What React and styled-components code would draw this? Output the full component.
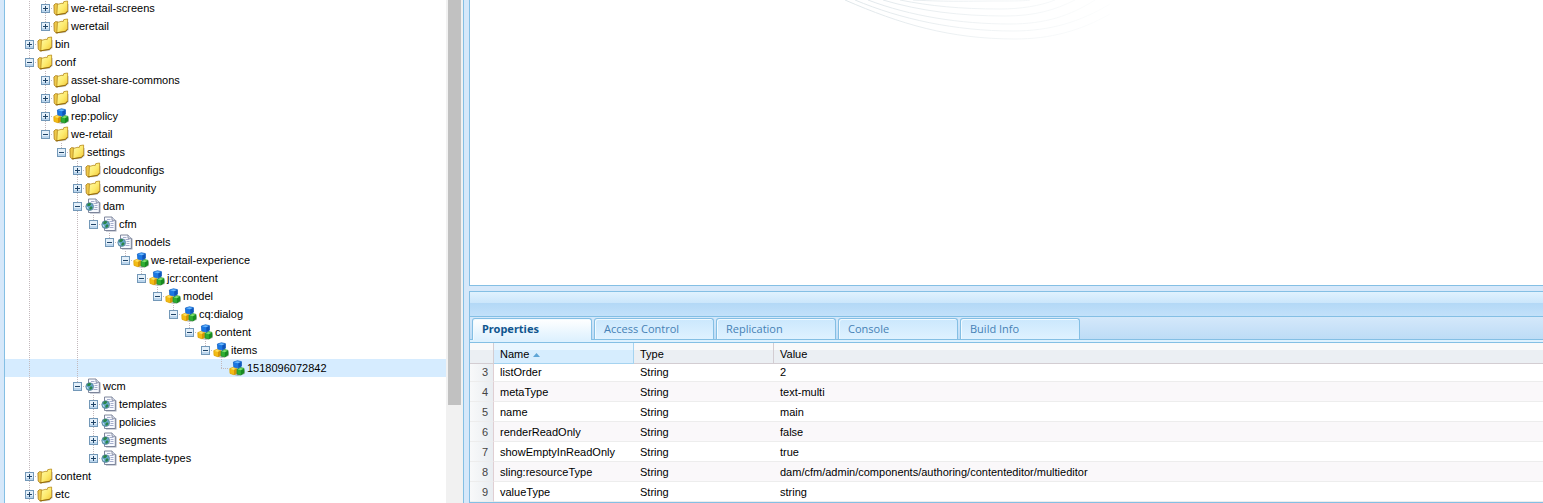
import React, { useState } from "react";
import styled, { createGlobalStyle } from "styled-components";

// guides: one flag per ancestor level, 1 draws the dotted line
const NODES = [
  { name: "we-retail-screens", guides: [0, 1], kind: "folder" },
  { name: "weretail", guides: [0, 1], kind: "folder", last: true },
  { name: "bin", guides: [0], kind: "folder" },
  { name: "conf", guides: [0], kind: "folder", open: true },
  { name: "asset-share-commons", guides: [0, 1], kind: "folder" },
  { name: "global", guides: [0, 1], kind: "folder" },
  { name: "rep:policy", guides: [0, 1], kind: "node" },
  { name: "we-retail", guides: [0, 1], kind: "folder", open: true, last: true },
  { name: "settings", guides: [0, 1, 0], kind: "folder", open: true, last: true },
  { name: "cloudconfigs", guides: [0, 1, 0, 0], kind: "folder" },
  { name: "community", guides: [0, 1, 0, 0], kind: "folder" },
  { name: "dam", guides: [0, 1, 0, 0], kind: "page", open: true },
  { name: "cfm", guides: [0, 1, 0, 0, 1], kind: "page", open: true, last: true },
  { name: "models", guides: [0, 1, 0, 0, 1, 0], kind: "page", open: true, last: true },
  { name: "we-retail-experience", guides: [0, 1, 0, 0, 1, 0, 0], kind: "node", open: true, last: true },
  { name: "jcr:content", guides: [0, 1, 0, 0, 1, 0, 0, 0], kind: "node", open: true, last: true },
  { name: "model", guides: [0, 1, 0, 0, 1, 0, 0, 0, 0], kind: "node", open: true, last: true },
  { name: "cq:dialog", guides: [0, 1, 0, 0, 1, 0, 0, 0, 0, 0], kind: "node", open: true, last: true },
  { name: "content", guides: [0, 1, 0, 0, 1, 0, 0, 0, 0, 0, 0], kind: "node", open: true, last: true },
  { name: "items", guides: [0, 1, 0, 0, 1, 0, 0, 0, 0, 0, 0, 0], kind: "node", open: true, last: true },
  { name: "1518096072842", guides: [0, 1, 0, 0, 1, 0, 0, 0, 0, 0, 0, 0, 0], kind: "node", leaf: true, last: true },
  { name: "wcm", guides: [0, 1, 0, 0], kind: "page", open: true, last: true },
  { name: "templates", guides: [0, 1, 0, 0, 0], kind: "page" },
  { name: "policies", guides: [0, 1, 0, 0, 0], kind: "page" },
  { name: "segments", guides: [0, 1, 0, 0, 0], kind: "page" },
  { name: "template-types", guides: [0, 1, 0, 0, 0], kind: "page", last: true },
  { name: "content", guides: [0], kind: "folder" },
  { name: "etc", guides: [0], kind: "folder" },
];

const TABS = ["Properties", "Access Control", "Replication", "Console", "Build Info"];

const PROPERTIES = [
  [3, "listOrder", "String", "2"],
  [4, "metaType", "String", "text-multi"],
  [5, "name", "String", "main"],
  [6, "renderReadOnly", "String", "false"],
  [7, "showEmptyInReadOnly", "String", "true"],
  [8, "sling:resourceType", "String", "dam/cfm/admin/components/authoring/contenteditor/multieditor"],
  [9, "valueType", "String", "string"],
];

// path per ring, outermost first
const RINGS = [
  "M375 0C430 24 480 39 545 39C580 39 610 31 640 14",
  "M385 0C430 19 485 31 543 31C580 31 610 22 640 4",
  "M398 0C440 16 490 24 540 24C575 24 600 16 625 0",
  "M413 0C450 11 490 16 535 16C565 16 585 10 605 0",
  "M430 0C460 6 490 9 530 9C550 9 570 6 585 0",
  "M443 0C480 2 500 1 528 1C545 1 555 1 560 0",
];

function Gradients() {
  return (
    <Defs aria-hidden="true">
      <defs>
        <linearGradient id="gold" x1="0" y1="0" x2="1" y2="1">
          <stop offset="0" stopColor="#fffcae" />
          <stop offset=".55" stopColor="#fdea6c" />
          <stop offset="1" stopColor="#f0c437" />
        </linearGradient>
        <linearGradient id="ring" gradientUnits="userSpaceOnUse" x1="370" y1="0" x2="650" y2="0">
          <stop offset="0" stopColor="#dbe3e7" />
          <stop offset=".5" stopColor="#edf1f3" />
          <stop offset="1" stopColor="#fdfefe" />
        </linearGradient>
      </defs>
    </Defs>
  );
}

function NodeIcon({ kind }) {
  if (kind === "folder") {
    return (
      <Icon viewBox="0 0 16 16" aria-hidden="true">
        <path d="M3 15.5L12 15L15.8 12V4L14 4V12L5 14Z" fill="#8c8c8c" opacity=".4" />
        <path d="M.9 5L2.6 3.6L5 4V14.8H2.8L1.2 13Z" fill="#eec84a" stroke="#a87b17" strokeWidth=".8" strokeLinejoin="round" />
        <path d="M4.4 4.4L9 3.2L10.2 3.6L10.8 1.6L14.6 1V11L12.6 13.2L3.8 14.8Z" fill="url(#gold)" stroke="#b88c1c" strokeWidth=".8" strokeLinejoin="round" />
        <path d="M2.9 14.9L12.6 13.4L14.6 11" stroke="#8f6508" strokeWidth=".9" fill="none" />
      </Icon>
    );
  }
  if (kind === "page") {
    return (
      <Icon viewBox="0 0 16 16" aria-hidden="true">
        <path d="M5 15.5H15.5V4.5H14V14H5Z" fill="#7d869c" opacity=".7" />
        <path d="M3.5 1H11L14.3 4.3V14.5H3.5Z" fill="#f8faff" stroke="#737b92" strokeWidth=".9" />
        <path d="M11 1V4.3H14.3" fill="#dfe4f2" stroke="#737b92" strokeWidth=".8" />
        <path d="M6 3.5H9.5M8.5 5.5H12.5M9.5 7.5H12.5M9.5 9.5H12.5M8.5 11.5H12.5" stroke="#8f9ac0" strokeWidth=".8" />
        <circle cx="4.7" cy="8.6" r="3.9" fill="#65a5c8" stroke="#557d92" strokeWidth=".7" />
        <path d="M2.4 6.2C3.4 5 4.8 4.8 5.8 5.6C6.8 6.6 5.4 7.4 4.4 8C3.6 8.4 2.4 7.8 2 7.6ZM5 8.8C6.6 8 7.8 8.8 7.4 9.8C6.8 11.2 5.6 12.2 4.6 11.6C4 10.8 4.6 9.6 5 8.8Z" fill="#2a8548" />
        <path d="M1.6 9L3 9.8L2.8 11" stroke="#d5eaf5" strokeWidth=".8" fill="none" />
      </Icon>
    );
  }
  return (
    <Icon viewBox="0 0 16 16" aria-hidden="true">
      <path d="M3 14.6L9 16L15.9 14V9L14 13Z" fill="#555" opacity=".4" />
      <g strokeWidth=".8" strokeLinejoin="round">
        <path d="M.8 8.6L3.6 7.6L7.6 8.4V13.4L5 14.8L1 13.4Z" fill="#f3bb12" stroke="#e0a70d" />
        <path d="M1.4 8.9L3.8 8L6.8 8.7L4.8 9.8Z" fill="#ffe873" />
        <path d="M5 10L7.6 8.6V13.4L5 14.8Z" fill="#d4940a" />
        <path d="M8 9.2L11.4 7.6L15 8.4V12.8L12 15L8 14Z" fill="#2eae32" stroke="#228f28" />
        <path d="M8.6 9.3L11.4 8L14.6 8.7L11.6 10.2Z" fill="#80df6e" />
        <path d="M11.8 10.4L15 8.8V12.8L12 15Z" fill="#188a20" />
        <path d="M4.4 2L8.4 .8L12.4 1.6V6.2L9.4 8L4.8 7Z" fill="#1b78e4" stroke="#1765c4" />
        <path d="M5 2.2L8.4 1.2L11.8 1.9L9 3.2Z" fill="#6bb8fd" />
        <path d="M9.2 3.4L12.4 2V6.2L9.4 8Z" fill="#1055b8" />
      </g>
    </Icon>
  );
}

function TreeRow({ node, selected, onSelect }) {
  return (
    <Row role="treeitem" aria-level={node.guides.length} aria-selected={selected} $selected={selected} onClick={onSelect}>
      {node.guides.map((level, i) => <Guide key={i} $line={hasLine(node.guides, i)} />)}
      <Elbow $last={node.last}>
        {!node.leaf && (
          <Toggle aria-label={(node.open ? "Collapse " : "Expand ") + node.name}>
            <svg width="9" height="9" viewBox="0 0 9 9" shapeRendering="crispEdges">
              <rect x=".5" y=".5" width="8" height="8" fill="#e4f0fa" stroke="#7398b8" />
              <path d="M1 6H8V8H1Z" fill="#bcd6ed" />
              <path d={node.open ? "M2 4.5H7" : "M2 4.5H7M4.5 2V7"} stroke="#1f4468" />
            </svg>
          </Toggle>
        )}
      </Elbow>
      <NodeIcon kind={node.kind} />
      <Label>{node.name}</Label>
    </Row>
  );
}

function hasLine(guides, i) {
  return guides[i] === 1;
}

function App() {
  const [selected, setSelected] = useState(20);
  const [tab, setTab] = useState(0);
  return (
    <>
      <GlobalStyle />
      <Gradients />
      <Page>
        <TreePanel>
          <Tree role="tree">
            {NODES.map((node, i) => (
              <TreeRow key={i} node={node} selected={i === selected} onSelect={() => setSelected(i)} />
            ))}
          </Tree>
          <Scrollbar><Thumb /></Scrollbar>
        </TreePanel>
        <Main>
          <Home>
            <svg width="700" height="60" viewBox="0 0 700 60" fill="none" aria-hidden="true">
              {RINGS.map((d) => <path key={d} d={d} stroke="url(#ring)" strokeWidth=".9" />)}
            </svg>
          </Home>
          <Details>
            <Toolbar />
            <TabStrip role="tablist">
              {TABS.map((name, i) => (
                <Tab key={name} role="tab" aria-selected={i === tab} $active={i === tab} onClick={() => setTab(i)}>{name}</Tab>
              ))}
            </TabStrip>
            <TabSpacer />
            <Grid>
              <colgroup>
                <NumberCol />
                <FieldCol />
                <FieldCol />
                <col />
              </colgroup>
              <thead>
                <tr>
                  <Th aria-label="Row" />
                  <Th $sorted aria-sort="ascending">
                    Name
                    <SortArrow viewBox="0 0 7 4" aria-hidden="true"><path d="M0 4L3.5 0L7 4Z" fill="#5da5d6" /></SortArrow>
                  </Th>
                  <Th>Type</Th>
                  <Th>Value</Th>
                </tr>
              </thead>
              <tbody>
                {PROPERTIES.map(([num, name, type, value]) => (
                  <PropertyRow key={num}>
                    <NumberCell>{num}</NumberCell>
                    <Td>{name}</Td>
                    <Td>{type}</Td>
                    <Td>{value}</Td>
                  </PropertyRow>
                ))}
              </tbody>
            </Grid>
          </Details>
        </Main>
      </Page>
    </>
  );
}
export default App;

const GlobalStyle = createGlobalStyle`
*{
  box-sizing:border-box;
}
body{
  margin:0;
  color:#000;
  font-family:"Liberation Sans",Arial,sans-serif;
  font-size:11px;
}
button{
  margin:0;
  padding:0;
  border:0;
  background:none;
  font:inherit;
  cursor:pointer;
}
`
const Defs = styled.svg`
position:absolute;
width:0;
height:0;
`
const Page = styled.div`
display:flex;
height:100vh;
padding-left:4px;
overflow:hidden;
background:#d6e8fa;
`
const TreePanel = styled.div`
display:flex;
flex:none;
width:30%;
max-width:460px;
border:solid #84bfe4;
border-width:0 1px;
background:#fff;
`
const Tree = styled.ul`
display:flex;
flex-direction:column;
justify-content:flex-end;
flex:1;
min-width:0;
margin:0;
padding:0;
overflow:hidden;
list-style:none;
`
const Row = styled.li`
display:flex;
align-items:center;
flex:none;
height:18px;
line-height:18px;
white-space:nowrap;
cursor:pointer;
background:${props => props.$selected ? "#d6ecff" : "none"};
`
const Guide = styled.span`
flex:none;
width:16px;
height:18px;
background:${props => props.$line ? "repeating-linear-gradient(#c3b9bd 0 1px,transparent 1px 2px) 8px 0/1px 100% no-repeat" : "none"};
`
const Elbow = styled.span`
display:flex;
flex:none;
justify-content:center;
align-items:center;
width:16px;
height:18px;
background:
  repeating-linear-gradient(#c3b9bd 0 1px,transparent 1px 2px) 8px 0/1px ${props => props.$last ? "9px" : "100%"} no-repeat,
  repeating-linear-gradient(90deg,#c3b9bd 0 1px,transparent 1px 2px) 8px 9px/8px 1px no-repeat;
`
const Toggle = styled.button`
display:flex;
padding-top:1px;
padding-left:1px;
`
const Icon = styled.svg`
flex:none;
width:16px;
height:16px;
`
const Label = styled.span`
padding-left:2px;
`
const Scrollbar = styled.div`
flex:none;
width:17px;
padding:0 2px;
background:#f1f1f1;
`
const Thumb = styled.div`
height:80.5%;
background:#c1c1c1;
`
const Main = styled.main`
display:flex;
flex-direction:column;
flex:1;
gap:5px;
min-width:0;
padding-left:5px;
`
const Home = styled.section`
flex:1;
min-height:0;
overflow:hidden;
border:solid #84bfe4;
border-width:0 0 1px 1px;
background:#fff;
`
const Details = styled.section`
flex:none;
border:1px solid #84bfe4;
border-right:0;
background:#fff;
`
const Toolbar = styled.div`
height:25px;
border-bottom:1px solid #84bfe4;
background:linear-gradient(#e0f2fe,#cbe6fb 11px,#b3d8f6 11px,#c2e1fa);
`
const TabStrip = styled.div`
display:flex;
gap:2px;
height:23px;
padding:1px 2px 0;
border-bottom:1px solid #84bfe4;
background:linear-gradient(#d4e8fa,#bddcf6);
`
const Tab = styled.button`
flex:none;
width:120px;
height:${props => props.$active ? "22px" : "21px"};
padding:0 9px ${props => props.$active ? "2px" : "0"};
border:1px solid #84bfe4;
border-bottom:0;
border-radius:3px 3px 0 0;
color:${props => props.$active ? "#10568f" : "#4681b5"};
background:${props => props.$active ? "linear-gradient(#fff,#def1fe)" : "linear-gradient(#cbe8fd,#dff2ff)"};
box-shadow:inset 1px 1px 0 #f1faff;
font-family:${props => props.$active ? '"Noto Sans"' : '"Open Sans"'},Tahoma,sans-serif;
font-weight:${props => props.$active ? 700 : 400};
line-height:18px;
text-align:left;
`
const TabSpacer = styled.div`
height:3px;
border-bottom:1px solid #84bfe4;
background:#def1fe;
`
const Grid = styled.table`
width:100%;
table-layout:fixed;
border-collapse:separate;
border-spacing:0;
`
const NumberCol = styled.col`
width:24px;
`
const FieldCol = styled.col`
width:140px;
`
const Th = styled.th`
height:21px;
padding:2px 6px 0;
border-right:1px solid ${props => props.$sorted ? "#a5d3f0" : "#d3cdd2"};
border-bottom:1px solid ${props => props.$sorted ? "#a5d3f0" : "#d3cdd2"};
background:${props => props.$sorted ? "linear-gradient(#e9f6ff 0 7px,#d6edfe 7px)" : "linear-gradient(#f9f9fa 0 7px,#ebeff3 7px)"};
font-weight:400;
text-align:left;
&:last-child{
  border-right:0;
}
`
const SortArrow = styled.svg`
width:7px;
height:4px;
margin-left:4px;
vertical-align:1px;
`
const Td = styled.td`
height:20px;
padding:0 6px;
border-bottom:1px solid #ededed;
overflow:hidden;
white-space:nowrap;
`
const NumberCell = styled(Td)`
padding:0 5px 0 0;
border-right:1px solid #e0cfd3;
background:linear-gradient(90deg,#f8f9fa,#e9edf1);
color:#444;
text-align:right;
`
const PropertyRow = styled.tr`
&:nth-child(even){
  background:#faf8fa;
}
/* first visible row is partly under the header */
&:first-child td{
  height:18px;
  padding-bottom:1px;
}
`
